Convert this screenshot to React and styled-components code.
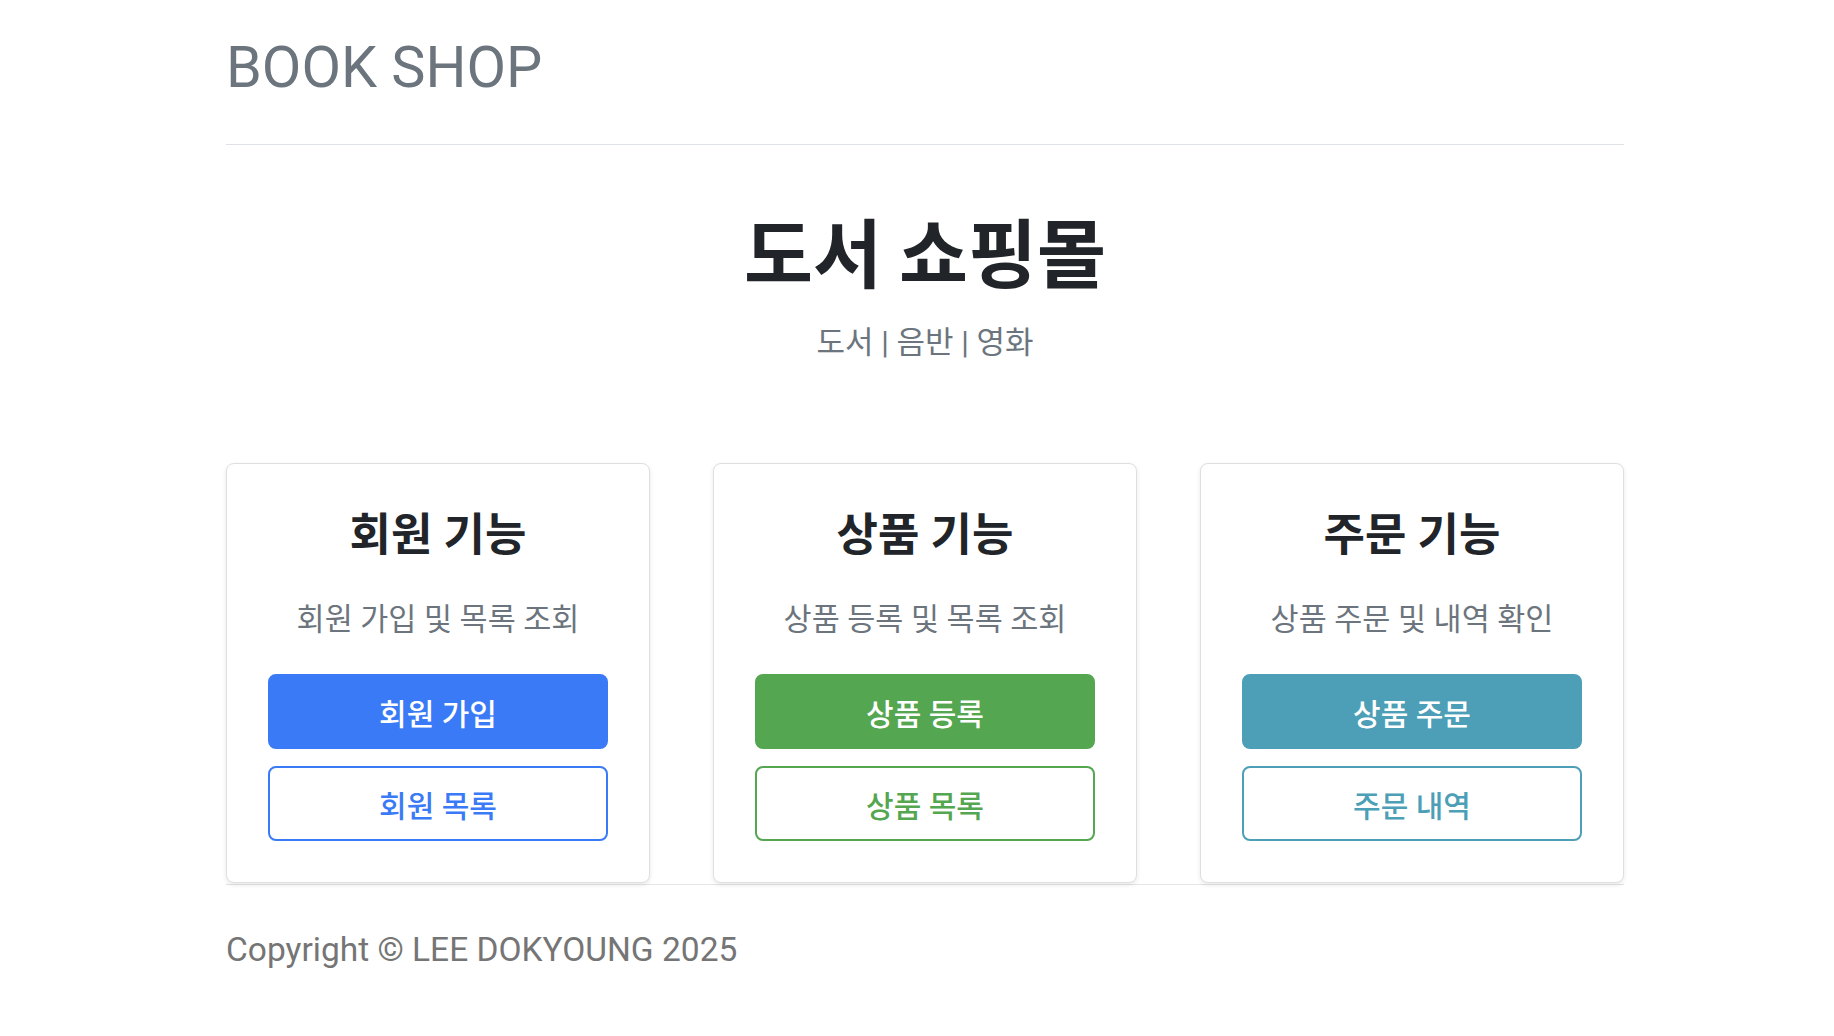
import React from "react";
import styled, { createGlobalStyle } from "styled-components";

const GlobalStyle = createGlobalStyle`
  body {
    margin: 0;
    background: #fff;
    font-family: Roboto, "Noto Sans CJK KR", sans-serif;
    color: #212529;
  }
`;

const colors = {
  primary: "#3b7af7",
  success: "#55a650",
  info: "#4c9fb6",
};

const features = [
  {
    title: "회원 기능",
    desc: "회원 가입 및 목록 조회",
    main: "회원 가입",
    sub: "회원 목록",
    tone: "primary",
  },
  {
    title: "상품 기능",
    desc: "상품 등록 및 목록 조회",
    main: "상품 등록",
    sub: "상품 목록",
    tone: "success",
  },
  {
    title: "주문 기능",
    desc: "상품 주문 및 내역 확인",
    main: "상품 주문",
    sub: "주문 내역",
    tone: "info",
  },
];

function App() {
  return (
    <>
      <GlobalStyle />
      <Container>
        <Header>
          <Brand>BOOK SHOP</Brand>
        </Header>

        <Hero>
          <Title>도서 쇼핑몰</Title>
          <Lead>도서 | 음반 | 영화</Lead>
        </Hero>

        <CardRow>
          {features.map((f) => (
            <Card key={f.title}>
              <CardTitle>{f.title}</CardTitle>
              <CardText>{f.desc}</CardText>
              <Button tone={f.tone}>{f.main}</Button>
              <Button tone={f.tone} outline>
                {f.sub}
              </Button>
            </Card>
          ))}
        </CardRow>

        <Footer>Copyright © LEE DOKYOUNG 2025</Footer>
      </Container>
    </>
  );
}

export default App;

const Container = styled.div`
  width: 1398px;
  margin-left: 226px;
`;

const Header = styled.header`
  padding-top: 33px;
  padding-bottom: 42px;
  border-bottom: 1px solid #dee2e6;
`;

const Brand = styled.h1`
  margin: 0;
  font-family: Roboto, sans-serif;
  font-size: 57.5px;
  font-weight: 400;
  line-height: 1.2;
  color: #6c757d;
`;

const Hero = styled.section`
  padding-top: 60px;
  text-align: center;
`;

const Title = styled.h2`
  margin: 0 0 25px;
  font-family: "Noto Sans CJK KR", sans-serif;
  font-size: 75px;
  font-weight: 700;
  line-height: 1.2;
  color: #212529;
`;

const Lead = styled.p`
  margin: 0;
  font-size: 31px;
  line-height: 1.5;
  color: #6c757d;
`;

const CardRow = styled.div`
  display: grid;
  grid-template-columns: repeat(3, 1fr);
  gap: 63px;
  margin-top: 96px;
`;

const Card = styled.div`
  display: flex;
  flex-direction: column;
  padding: 45px 41px 41px;
  border: 1px solid #dfdfdf;
  border-radius: 8px;
  background: #fff;
  box-shadow: 0 2px 5px rgba(0, 0, 0, 0.09);
  text-align: center;
`;

const CardTitle = styled.h3`
  margin: 0 0 34px;
  font-size: 45px;
  font-weight: 700;
  line-height: 1.2;
  color: #212529;
`;

const CardText = styled.p`
  margin: 0 0 32px;
  font-size: 30.5px;
  line-height: 1.5;
  color: #6c757d;
`;

const Button = styled.button`
  display: block;
  width: 100%;
  height: 75px;
  padding: 0;
  border: 2px solid ${(p) => colors[p.tone]};
  border-radius: 8px;
  background: ${(p) => (p.outline ? "#fff" : colors[p.tone])};
  color: ${(p) => (p.outline ? colors[p.tone] : "#fff")};
  font-family: Roboto, "Noto Sans CJK KR", sans-serif;
  font-size: 30px;
  font-weight: 500;
  cursor: pointer;

  & + & {
    margin-top: 17px;
  }
`;

const Footer = styled.footer`
  margin-top: 1px;
  padding-top: 40px;
  border-top: 1px solid #e5e5e5;
  font-size: 33.5px;
  line-height: 1.5;
  color: #757575;
`;
